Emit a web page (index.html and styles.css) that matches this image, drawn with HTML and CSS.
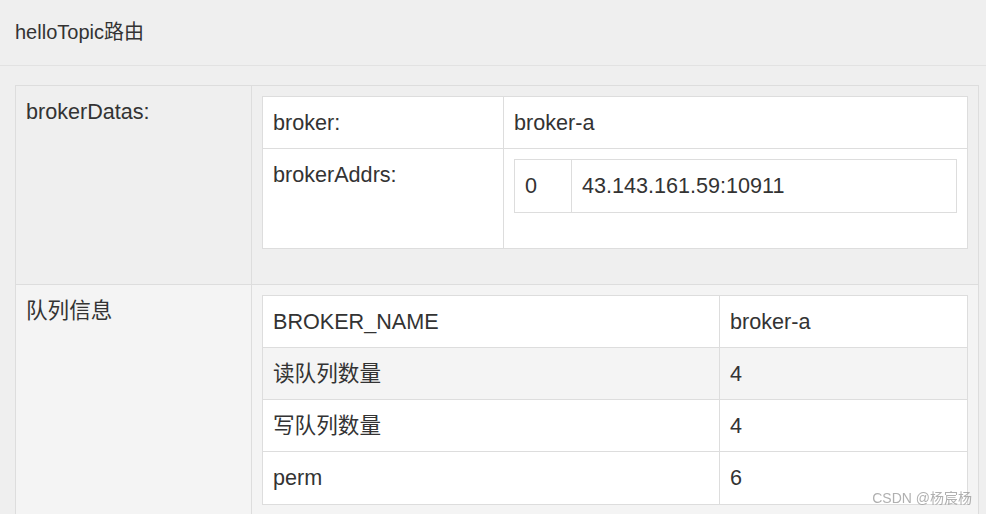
FILE: index.html
```html
<!DOCTYPE html>
<html lang="zh-CN">
<head>
<meta charset="utf-8">
<title>helloTopic路由</title>
<link rel="stylesheet" href="styles.css">
</head>
<body>
<div class="page-header">helloTopic路由</div>
<div class="page-body">
  <table class="grid outer">
    <colgroup><col class="col-outer-key"><col></colgroup>
    <tbody>
      <tr class="row-plain">
        <td>brokerDatas:</td>
        <td>
          <table class="grid inner">
            <colgroup><col class="col-broker-key"><col></colgroup>
            <tbody>
              <tr><td>broker:</td><td>broker-a</td></tr>
              <tr>
                <td>brokerAddrs:</td>
                <td>
                  <table class="grid inner">
                    <colgroup><col class="col-addr-key"><col></colgroup>
                    <tbody>
                      <tr><td>0</td><td>43.143.161.59:10911</td></tr>
                    </tbody>
                  </table>
                </td>
              </tr>
            </tbody>
          </table>
        </td>
      </tr>
      <tr class="row-striped">
        <td>队列信息</td>
        <td>
          <table class="grid inner">
            <colgroup><col class="col-queue-key"><col></colgroup>
            <tbody>
              <tr><td>BROKER_NAME</td><td>broker-a</td></tr>
              <tr class="row-striped"><td>读队列数量</td><td>4</td></tr>
              <tr><td>写队列数量</td><td>4</td></tr>
              <tr><td>perm</td><td>6</td></tr>
            </tbody>
          </table>
        </td>
      </tr>
    </tbody>
  </table>
</div>
<div class="watermark">CSDN @杨宸杨</div>
</body>
</html>
```

FILE: styles.css
```css
html {
  overflow: hidden;
}

body {
  margin: 0;
  background: #efefef;
  color: #333333;
  font-family: "Liberation Sans", Arial, "Noto Sans CJK SC", sans-serif;
}

.page-header {
  padding: 18px 15px 19px;
  font-size: 20px;
  line-height: 28px;
  border-bottom: 1px solid #e2e2e2;
}

.page-body {
  padding: 19px 7px 0 15px;
}

.grid {
  width: 100%;
  border-collapse: collapse;
  table-layout: fixed;
  font-size: 21.6px;
  line-height: 31.25px;
}

.grid td {
  border: 1px solid #dddddd;
  padding: 10px;
  vertical-align: top;
  text-align: left;
}

.inner {
  background: #ffffff;
  margin-bottom: 25px;
}

.outer {
  background: transparent;
}

.row-striped > td {
  background: #f4f4f4;
}

.col-outer-key {
  width: 236px;
}

.col-broker-key {
  width: 241px;
}

.col-addr-key {
  width: 57px;
}

.col-queue-key {
  width: 457px;
}

.watermark {
  position: fixed;
  right: 14px;
  bottom: 8px;
  font-size: 14px;
  line-height: 16px;
  color: rgba(150, 150, 150, 0.75);
}
```
